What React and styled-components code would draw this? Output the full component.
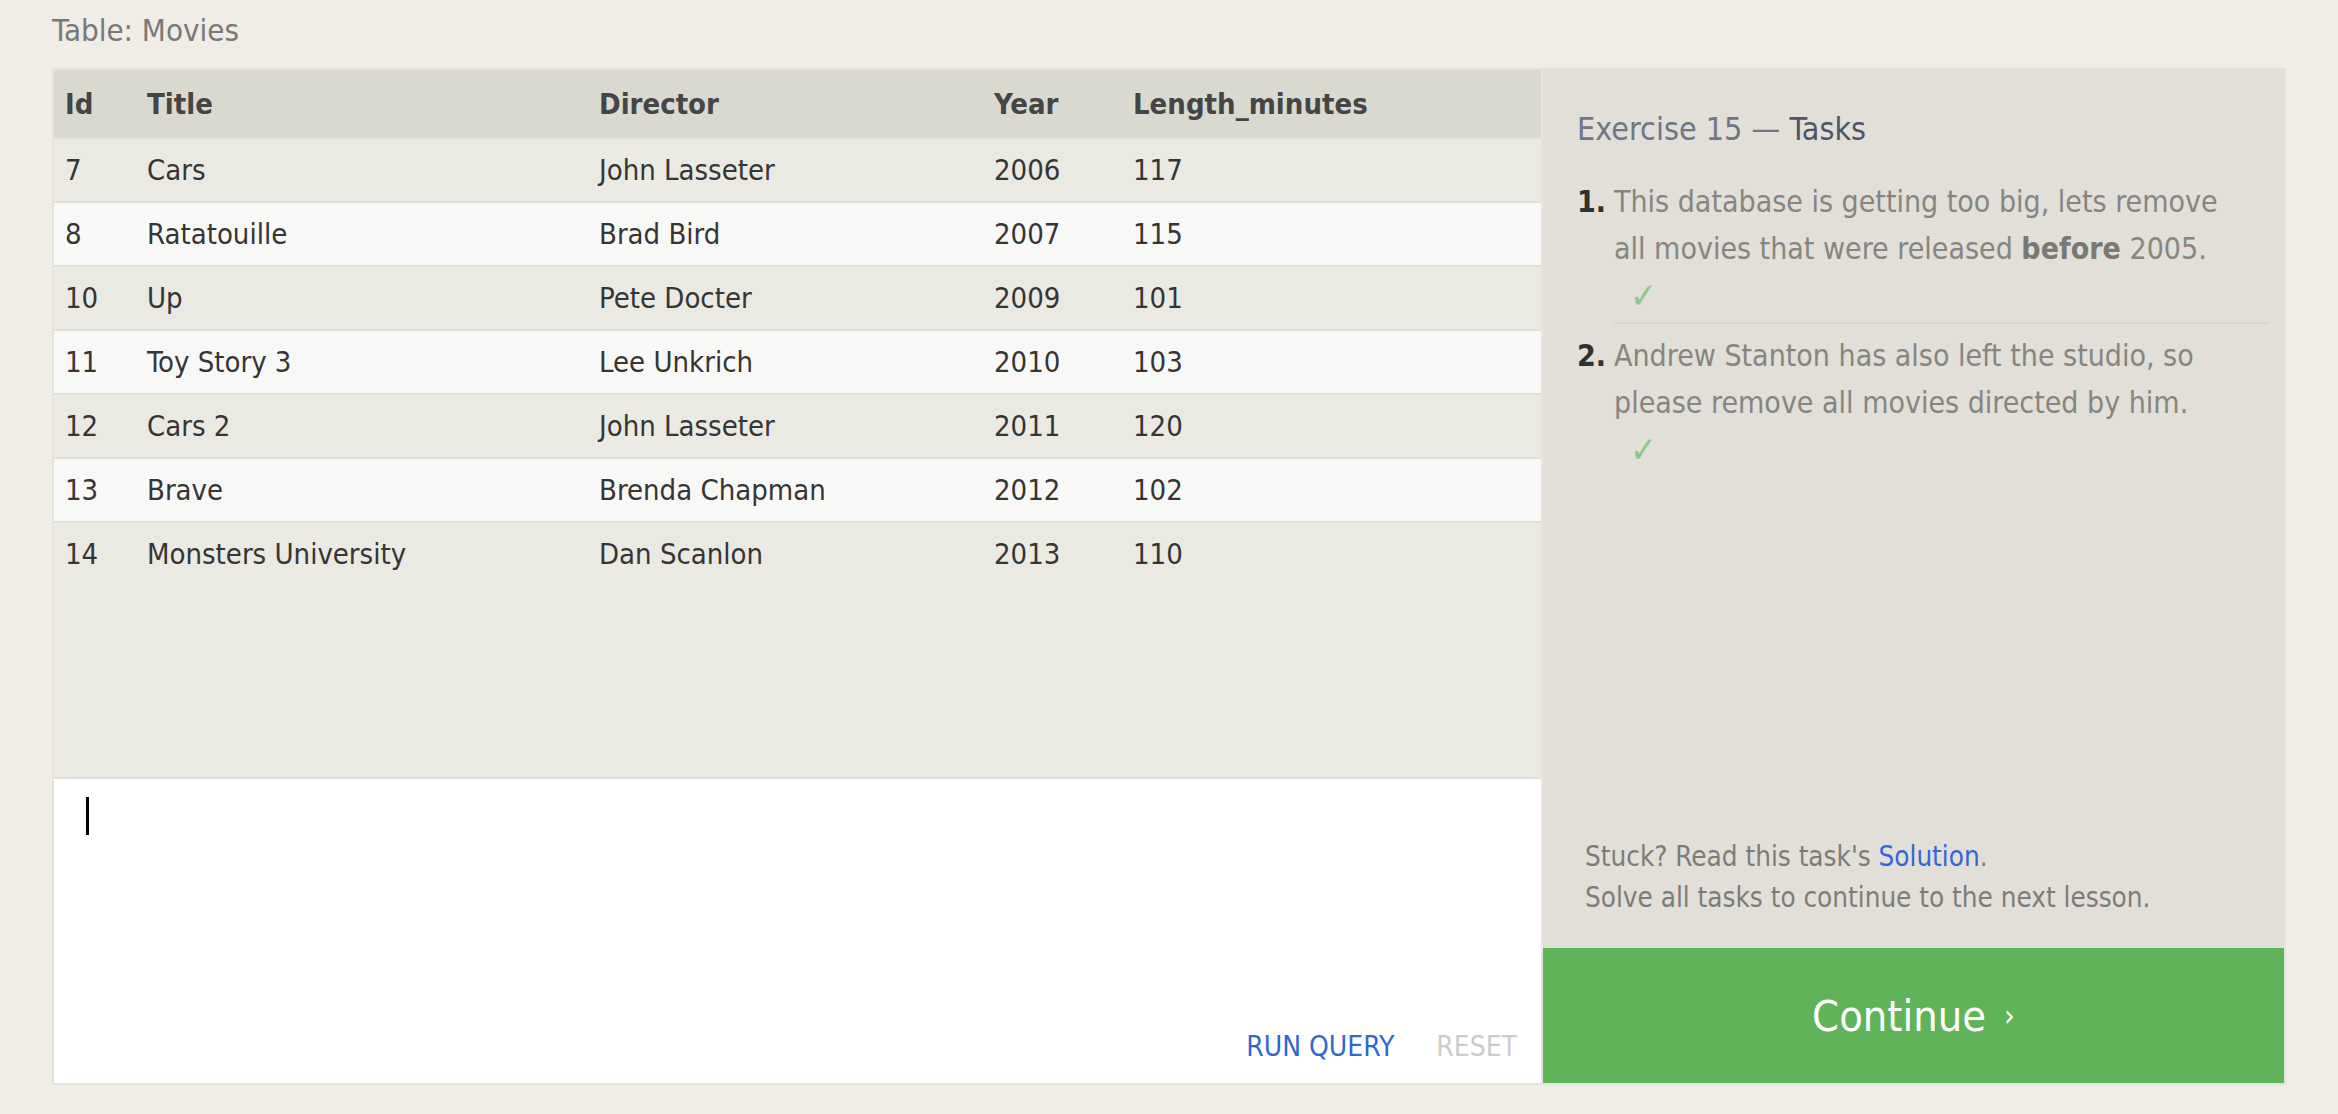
import React from "react";
import styled, { createGlobalStyle } from "styled-components";

const FONT = `"DejaVu Sans Condensed", "DejaVu Sans", "Liberation Sans Narrow", sans-serif`;

const GlobalStyle = createGlobalStyle`
  html, body { margin: 0; padding: 0; }
  body {
    background: #efede6;
    font-family: ${FONT};
    font-stretch: condensed;
  }
`;

const Page = styled.div`
  padding: 8px 52px 0 52px;
`;

const Label = styled.div`
  font-size: 31px;
  line-height: 44px;
  color: #787878;
  margin-bottom: 16px;
`;

const Panel = styled.div`
  display: grid;
  grid-template-columns: 1489px 1fr;
  height: 1013px;
  border: 2px solid #e3e2db;
`;

const LeftCol = styled.div`
  display: flex;
  flex-direction: column;
  border-right: 2px solid #e6e5de;
  min-width: 0;
`;

const TableArea = styled.div`
  flex: none;
  height: 707px;
  background: #eae9e2;
  border-bottom: 2px solid #e1e0da;
`;

const Row = styled.div`
  display: grid;
  grid-template-columns: 82px 452px 395px 139px 1fr;
  align-items: center;
  height: ${(p) => (p.$head ? "67px" : "62px")};
  background: ${(p) => (p.$head ? "#dad9d0" : p.$alt ? "#f8f8f7" : "#eae9e2")};
  border-bottom: 2px solid ${(p) => (p.$last ? "transparent" : "#e0dfd9")};
  color: ${(p) => (p.$head ? "#454545" : "#353535")};
  font-weight: ${(p) => (p.$head ? 700 : 400)};
  font-size: 29px;
`;

const Cell = styled.div`
  padding-left: 11px;
  white-space: nowrap;
`;

const Editor = styled.div`
  flex: 1;
  background: #ffffff;
  display: flex;
  flex-direction: column;
  justify-content: space-between;
  padding: 18px 24px 18px 32px;
`;

const Caret = styled.span`
  display: block;
  width: 3px;
  height: 38px;
  background: #000;
`;

const Actions = styled.div`
  display: flex;
  justify-content: flex-end;
  gap: 42px;
`;

const ActionButton = styled.span`
  font-size: 28px;
  line-height: 36px;
  text-transform: uppercase;
  color: ${(p) => (p.$disabled ? "#cccccc" : "#3267d3")};
`;

const RightCol = styled.div`
  display: flex;
  flex-direction: column;
  background: #e1dfd8;
`;

const Tasks = styled.div`
  padding: 37px 15px 0 34px;
`;

const Heading = styled.div`
  font-size: 32px;
  line-height: 44px;
  color: #707686;
  margin-bottom: 27px;
`;

const HeadingStrong = styled.span`
  color: #4f5566;
`;

const TaskList = styled.ol`
  list-style: none;
  margin: 0;
  padding: 0;
`;

const TaskItem = styled.li`
  display: grid;
  grid-template-columns: 37px 1fr;
  &:not(:first-child) > div {
    padding-top: 8px;
  }
  &:not(:last-child) > div:last-child {
    padding-bottom: 3px;
    border-bottom: 2px solid #d8d6cd;
  }
`;

const TaskNum = styled.div`
  font-size: 30px;
  line-height: 47px;
  font-weight: 700;
  color: #303030;
`;

const TaskBody = styled.div`
  font-size: 30px;
  line-height: 47px;
  color: #878580;
`;

const TaskText = styled.p`
  margin: 0 24px 0 0;
`;

const Strong = styled.b`
  font-weight: 700;
  color: #7a7873;
`;

const Check = styled.div`
  color: #8ec889;
  padding-left: 16px;
  font-size: 36px;
`;

const Spacer = styled.div`
  flex: 1;
`;

const Hint = styled.div`
  padding: 0 20px 30px 42px;
  font-size: 27.6px;
  line-height: 41px;
  color: #7e7c78;
`;

const Link = styled.a`
  color: #3366d6;
  text-decoration: none;
`;

const ContinueButton = styled.div`
  height: 135px;
  background: #61b35a;
  color: #ffffff;
  display: flex;
  align-items: center;
  justify-content: center;
  font-size: 43px;
`;

const Chevron = styled.span`
  font-size: 30px;
  margin-left: 18px;
`;

const movies = [
  [7, "Cars", "John Lasseter", 2006, 117],
  [8, "Ratatouille", "Brad Bird", 2007, 115],
  [10, "Up", "Pete Docter", 2009, 101],
  [11, "Toy Story 3", "Lee Unkrich", 2010, 103],
  [12, "Cars 2", "John Lasseter", 2011, 120],
  [13, "Brave", "Brenda Chapman", 2012, 102],
  [14, "Monsters University", "Dan Scanlon", 2013, 110],
];

const headers = ["Id", "Title", "Director", "Year", "Length_minutes"];

export default function App() {
  return (
    <>
      <GlobalStyle />
      <Page>
        <Label>Table: Movies</Label>
        <Panel>
          <LeftCol>
            <TableArea>
              <Row $head>
                {headers.map((h) => (
                  <Cell key={h}>{h}</Cell>
                ))}
              </Row>
              {movies.map((m, i) => (
                <Row key={m[0]} $alt={i % 2 === 1} $last={i === movies.length - 1}>
                  {m.map((v, j) => (
                    <Cell key={j}>{v}</Cell>
                  ))}
                </Row>
              ))}
            </TableArea>
            <Editor>
              <Caret />
              <Actions>
                <ActionButton>Run Query</ActionButton>
                <ActionButton $disabled>Reset</ActionButton>
              </Actions>
            </Editor>
          </LeftCol>
          <RightCol>
            <Tasks>
              <Heading>
                Exercise 15 — <HeadingStrong>Tasks</HeadingStrong>
              </Heading>
              <TaskList>
                <TaskItem>
                  <TaskNum>1.</TaskNum>
                  <TaskBody>
                    <TaskText>
                      This database is getting too big, lets remove all movies that
                      were released <Strong>before</Strong> 2005.
                    </TaskText>
                    <Check>✓</Check>
                  </TaskBody>
                </TaskItem>
                <TaskItem>
                  <TaskNum>2.</TaskNum>
                  <TaskBody>
                    <TaskText>
                      Andrew Stanton has also left the studio, so please remove all
                      movies directed by him.
                    </TaskText>
                    <Check>✓</Check>
                  </TaskBody>
                </TaskItem>
              </TaskList>
            </Tasks>
            <Spacer />
            <Hint>
              Stuck? Read this task's <Link>Solution</Link>.
              <br />
              Solve all tasks to continue to the next lesson.
            </Hint>
            <ContinueButton>
              Continue<Chevron>›</Chevron>
            </ContinueButton>
          </RightCol>
        </Panel>
      </Page>
    </>
  );
}
